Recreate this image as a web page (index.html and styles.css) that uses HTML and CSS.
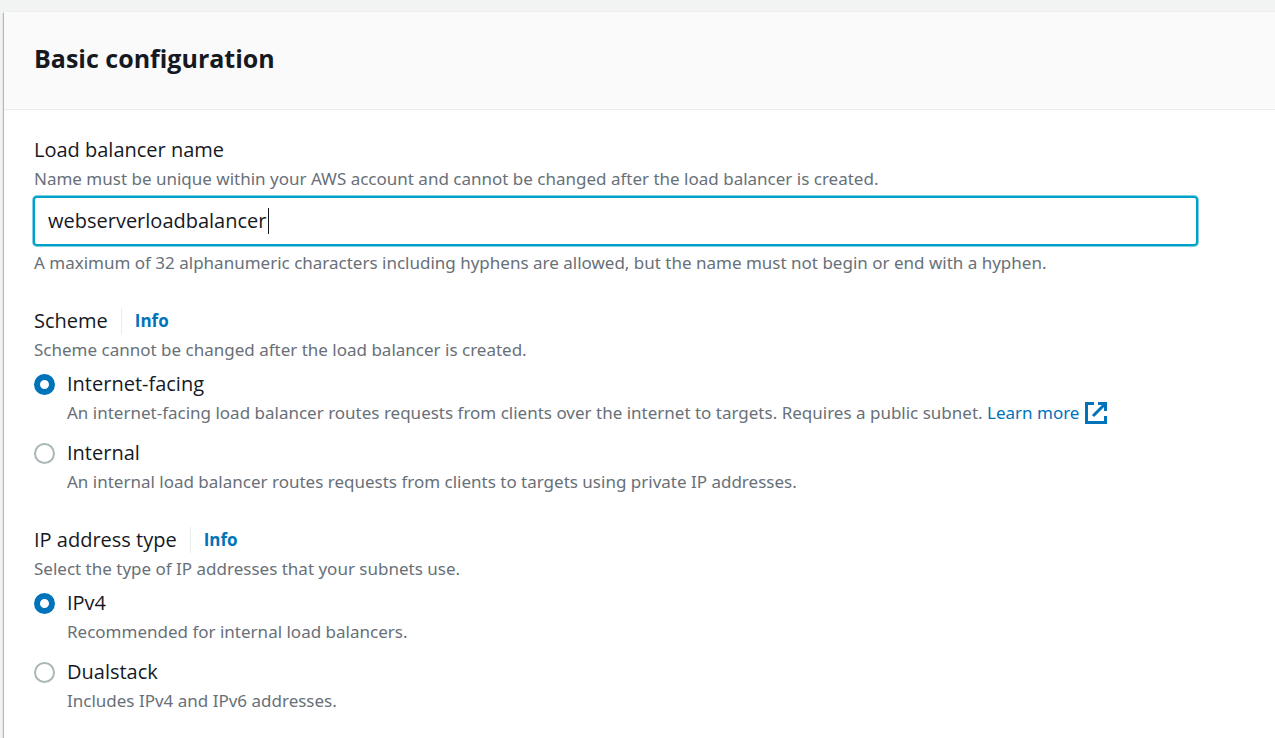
FILE: index.html
```html
<!DOCTYPE html>
<html lang="en">
<head>
<meta charset="utf-8">
<meta name="viewport" content="width=device-width, initial-scale=1">
<title>Basic configuration</title>
<link rel="stylesheet" href="styles.css">
</head>
<body>
<main class="panel">
  <header class="panel-header"><h2 class="panel-title">Basic configuration</h2></header>
  <form class="panel-body">
    <div class="field">
      <label class="label" for="lb-name">Load balancer name</label>
      <p class="hint" id="name-hint">Name must be unique within your AWS account and cannot be changed after the load balancer is created.</p>
      <div class="input-wrap">
        <input class="input" id="lb-name" type="text" value="webserverloadbalancer" spellcheck="false" aria-describedby="name-hint name-rule">
        <span class="caret"></span>
      </div>
      <p class="hint" id="name-rule">A maximum of 32 alphanumeric characters including hyphens are allowed, but the name must not begin or end with a hyphen.</p>
    </div>
    <section class="field" role="radiogroup" aria-labelledby="scheme-label">
      <div class="label-row"><span class="label" id="scheme-label">Scheme</span><a class="info" href="#">Info</a></div>
      <p class="hint">Scheme cannot be changed after the load balancer is created.</p>
      <div class="options">
        <div class="option">
          <input class="radio" type="radio" name="scheme" id="internet-facing" checked>
          <label class="label" for="internet-facing">Internet-facing</label>
          <p class="hint option-hint">An internet-facing load balancer routes requests from clients over the internet to targets. Requires a public subnet. <a class="link" href="#">Learn more<svg class="external" viewBox="0 0 22 22" aria-hidden="true"><path d="M9 1.5H1.5v19h19V14M13 1.5h7.500v7.500M20 2 8 14"/></svg></a></p>
        </div>
        <div class="option">
          <input class="radio" type="radio" name="scheme" id="internal">
          <label class="label" for="internal">Internal</label>
          <p class="hint option-hint">An internal load balancer routes requests from clients to targets using private IP addresses.</p>
        </div>
      </div>
    </section>
    <section class="field" role="radiogroup" aria-labelledby="ip-label">
      <div class="label-row"><span class="label" id="ip-label">IP address type</span><a class="info" href="#">Info</a></div>
      <p class="hint">Select the type of IP addresses that your subnets use.</p>
      <div class="options">
        <div class="option">
          <input class="radio" type="radio" name="ip" id="ipv4" checked>
          <label class="label" for="ipv4">IPv4</label>
          <p class="hint option-hint">Recommended for internal load balancers.</p>
        </div>
        <div class="option">
          <input class="radio" type="radio" name="ip" id="dualstack">
          <label class="label" for="dualstack">Dualstack</label>
          <p class="hint option-hint">Includes IPv4 and IPv6 addresses.</p>
        </div>
      </div>
    </section>
  </form>
</main>
</body>
</html>
```
FILE: styles.css
```css
* { box-sizing: border-box; }
body {
  margin: 0;
  padding: 12px 0 0 4px;
  background: #f2f3f3;
  color: #16191f;
  font-family: "Open Sans", "Noto Sans", sans-serif;
  font-size: 20px;
  line-height: 30px;
}
.panel {
  background: #fff;
  box-shadow: 0 0 1px 0 #d5dbdb, -1px 1px 1px 0 rgba(0, 28, 36, 0.3);
}
.panel-header {
  padding: 28px 30px 33px;
  background: #fafafa;
  border-bottom: 1px solid #eaeded;
}
.panel-title { margin: 0; font-size: 25px; line-height: 36px; font-weight: 700; }
.panel-body {
  display: flex;
  flex-direction: column;
  gap: 29px;
  padding: 25px 78px 24px 30px;
}
.label { display: block; }
.hint {
  margin: 0;
  color: #687078;
  font-family: "Noto Sans", "Open Sans", sans-serif;
  font-size: 17px;
  line-height: 28px;
}
.input-wrap { position: relative; margin: 4px 0; }
.input {
  display: block;
  width: 100%;
  height: 48px;
  padding: 0 13px 2px;
  border: 1px solid #00a1c9;
  border-radius: 3px;
  outline: none;
  box-shadow: 0 0 0 1px #00a1c9, 0 0 0 2px #80d0e4;
  background: #fff;
  color: inherit;
  font: inherit;
}
.caret {
  position: absolute;
  left: 234px;
  top: 11px;
  width: 1px;
  height: 26px;
  background: #16191f;
}
.label-row { display: flex; align-items: center; gap: 13px; }
.info {
  padding-left: 13px;
  border-left: 1px solid #eaeded;
  color: #0073bb;
  font-size: 17px;
  line-height: 26px;
  font-weight: 700;
  text-decoration: none;
}
.options { display: flex; flex-direction: column; gap: 11px; margin-top: 5px; }
.option {
  display: grid;
  grid-template-columns: 21px 1fr;
  column-gap: 12px;
  align-items: center;
}
.option-hint { grid-column: 2; }
.radio {
  appearance: none;
  width: 21px;
  height: 21px;
  margin: 0;
  border: 2px solid #aab7b8;
  border-radius: 50%;
  background: #fff;
}
.radio:checked { border: 6px solid #0073bb; }
.link { color: #0073bb; text-decoration: none; white-space: nowrap; }
.external {
  width: 22px;
  height: 22px;
  margin-left: 6px;
  vertical-align: -5px;
  fill: none;
  stroke: currentColor;
  stroke-width: 3;
}
```
